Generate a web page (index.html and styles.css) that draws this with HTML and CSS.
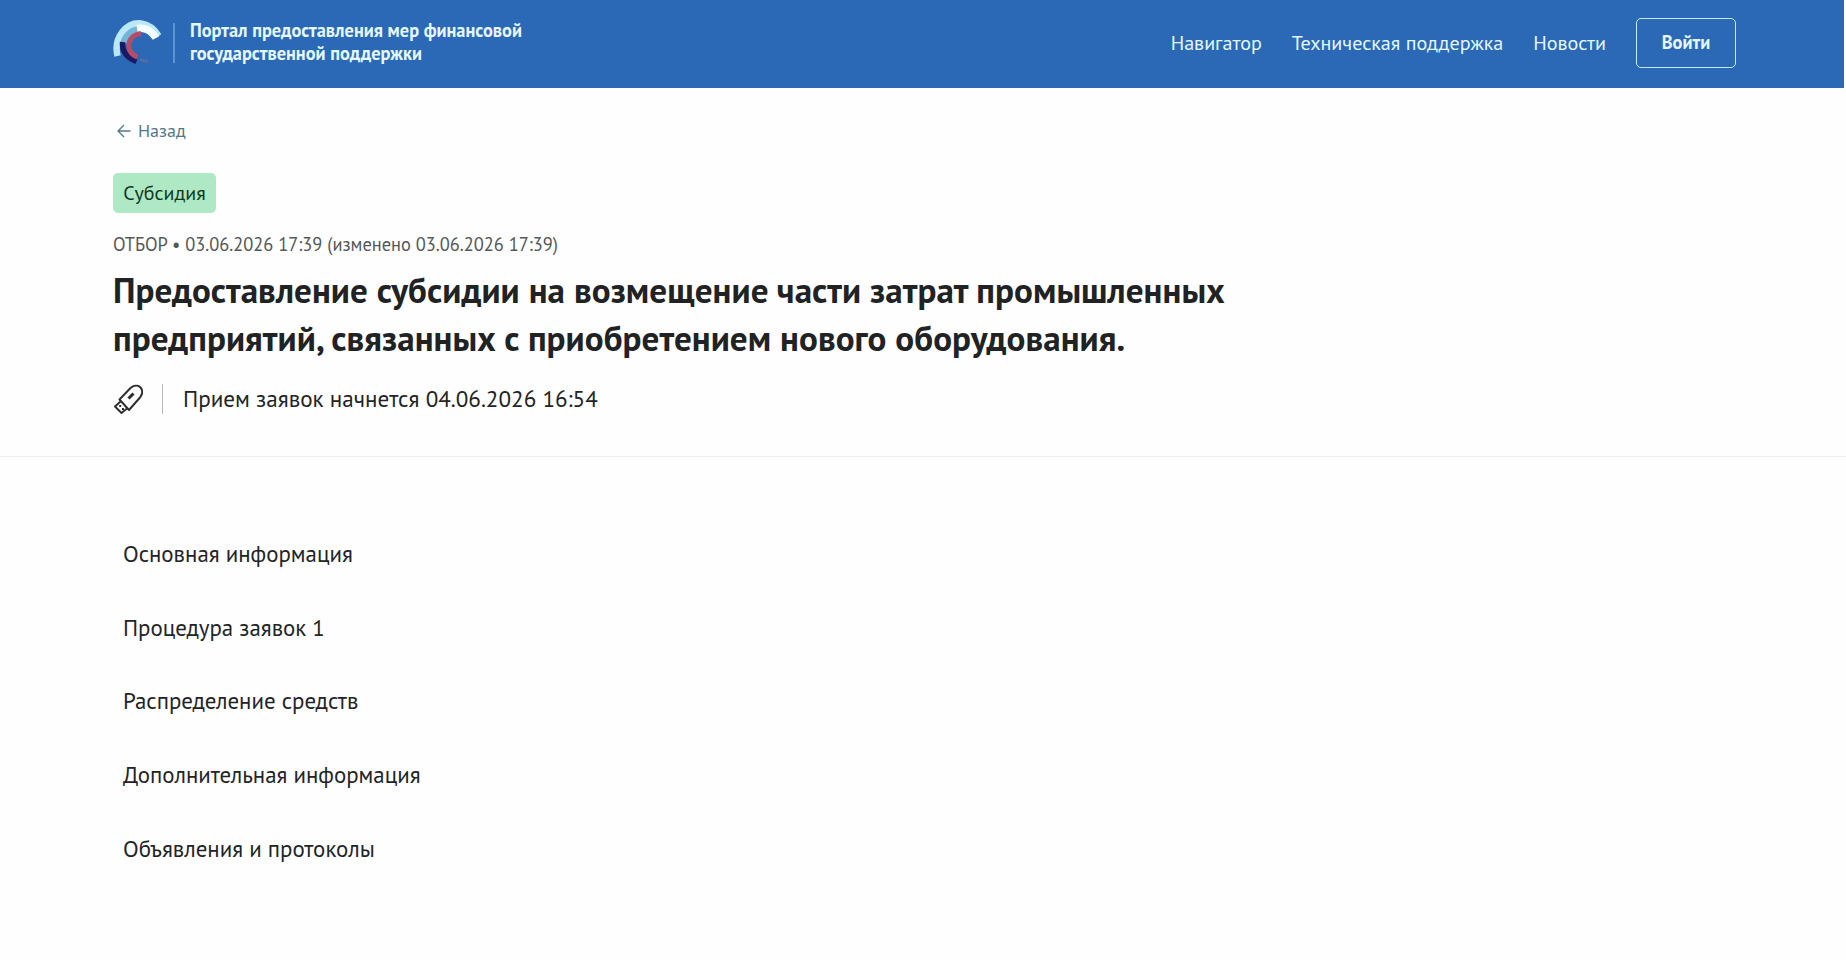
FILE: index.html
```html
<!DOCTYPE html>
<html lang="ru">
<head>
  <meta charset="UTF-8" />
  <meta name="viewport" content="width=device-width, initial-scale=1.0"/>
  <title>Портал предоставления мер финансовой государственной поддержки</title>
  <link rel="stylesheet" href="styles.css">
</head>
<body>
  <header class="header">
    <a class="brand" href="#">
      <svg class="logo" width="50" height="50" viewBox="0 0 50 50" fill="none">
        <path d="M4.500 38C0 19 14 4 28 5.500C36 6.500 42 12 45.500 18" stroke="#b9e8f9" stroke-width="6.500"/>
        <path d="M10.500 25C13 16 18 12 27 11" stroke="#73b5d5" stroke-width="6"/>
        <path d="M24 10.500C33 9 39 13 43 20" stroke="#f4feff" stroke-width="7.500"/>
        <path d="M27 41.500Q31 43 35 43.500" stroke="#5a6c9c" stroke-width="2.500"/>
        <path d="M9.500 24C9 33 14 40 23.500 43.500" stroke="#191a63" stroke-width="5.500"/>
        <path d="M28 15.500C14 17 11 34 24.500 39" stroke="#b64d66" stroke-width="5"/>
      </svg>
      <span class="brand-line"></span>
      <span class="brand-name">Портал предоставления мер финансовой<br>государственной поддержки</span>
    </a>
    <nav class="nav">
      <a href="#">Навигатор</a>
      <a href="#">Техническая поддержка</a>
      <a href="#">Новости</a>
      <button class="login">Войти</button>
    </nav>
  </header>

  <section class="intro">
    <a class="back" href="#">
      <svg width="14" height="14" viewBox="0 0 14 14" fill="none" stroke="currentColor" stroke-width="1.300">
        <path d="M13.500 7H1M7 1L1 7l6 6"/>
      </svg>
      Назад
    </a>
    <div class="tag">Субсидия</div>
    <p class="meta">ОТБОР • 03.06.2026 17:39 (изменено 03.06.2026 17:39)</p>
    <h1>Предоставление субсидии на возмещение части затрат промышленных<br>предприятий, связанных с приобретением нового оборудования.</h1>
    <div class="status">
      <svg width="30" height="30" viewBox="0 0 30 30" fill="none" stroke="#2b2d2f" stroke-width="1.900" stroke-linejoin="round">
        <path d="M6.500 15.500 17.500 4C20.500 1.500 24.500 1 27 3C30 6 30 9.500 27 13.500L16 26Z"/>
        <path d="M7.500 17.500 2 22.500 8.500 29 14 24.500"/>
        <path d="M15.500 14.500 20.500 9.500" stroke-width="3"/>
        <path d="M6.200 22h2M9 25h2" stroke-width="2"/>
      </svg>
      <span class="status-text">Прием заявок начнется 04.06.2026 16:54</span>
    </div>
  </section>

  <main class="sections">
    <a href="#">Основная информация</a>
    <a href="#">Процедура заявок 1</a>
    <a href="#">Распределение средств</a>
    <a href="#">Дополнительная информация</a>
    <a href="#">Объявления и протоколы</a>
  </main>
</body>
</html>
```
FILE: styles.css
```css
* {
  box-sizing: border-box;
  margin: 0;
  padding: 0;
}

body {
  font-family: 'PT Sans', 'Noto Sans', sans-serif;
  background: #fefefe;
  color: #222426;
  min-height: 100vh;
}

a {
  color: inherit;
  text-decoration: none;
}

.header {
  display: flex;
  justify-content: space-between;
  align-items: flex-start;
  height: 88px;
  margin-right: 2px;
  padding: 18px 108px 0 113px;
  background: #2b69b7;
  color: #e4f8ff;
}

.brand {
  display: flex;
  align-items: center;
}

.logo {
  flex: none;
}

.brand-line {
  width: 2px;
  height: 40px;
  margin: 0 15px 0 10px;
  background: #5b93d3;
}

.brand-name {
  padding-bottom: 2px;
  font-size: 18.350px;
  font-weight: 700;
  line-height: 23px;
}

.nav {
  display: flex;
  align-items: center;
  gap: 30px;
  font-size: 20.100px;
}

.login {
  width: 100px;
  height: 50px;
  padding-bottom: 2px;
  background: transparent;
  border: 1px solid #c4ebfb;
  border-radius: 5px;
  color: inherit;
  font-family: inherit;
  font-size: 18.400px;
  font-weight: 700;
}

.intro {
  height: 369px;
  padding: 30px 113px 0;
  border-bottom: 1px solid #eeeeee;
}

.back {
  display: flex;
  align-items: center;
  gap: 7px;
  height: 25px;
  padding-left: 4px;
  font-size: 18px;
  color: #527886;
}

.tag {
  width: 103px;
  height: 40px;
  margin-top: 30px;
  border-radius: 5px;
  background: #aee8c4;
  color: #12391f;
  font-size: 20px;
  line-height: 40px;
  text-align: center;
}

.meta {
  margin-top: 19px;
  font-size: 18.400px;
  line-height: 24px;
  color: #54575a;
}

h1 {
  margin-top: 10px;
  font-size: 35.100px;
  line-height: 48px;
  letter-spacing: 0.060px;
  color: #202224;
}

.status {
  display: flex;
  align-items: center;
  margin-top: 22px;
}

.status-text {
  height: 30px;
  margin-left: 19px;
  padding-left: 20px;
  border-left: 1px solid #b5b8ba;
  font-size: 23.100px;
  line-height: 28px;
}

.sections {
  display: flex;
  flex-direction: column;
  gap: 43.700px;
  padding: 82px 123px 0;
  font-size: 22.900px;
  line-height: 30px;
}
```
